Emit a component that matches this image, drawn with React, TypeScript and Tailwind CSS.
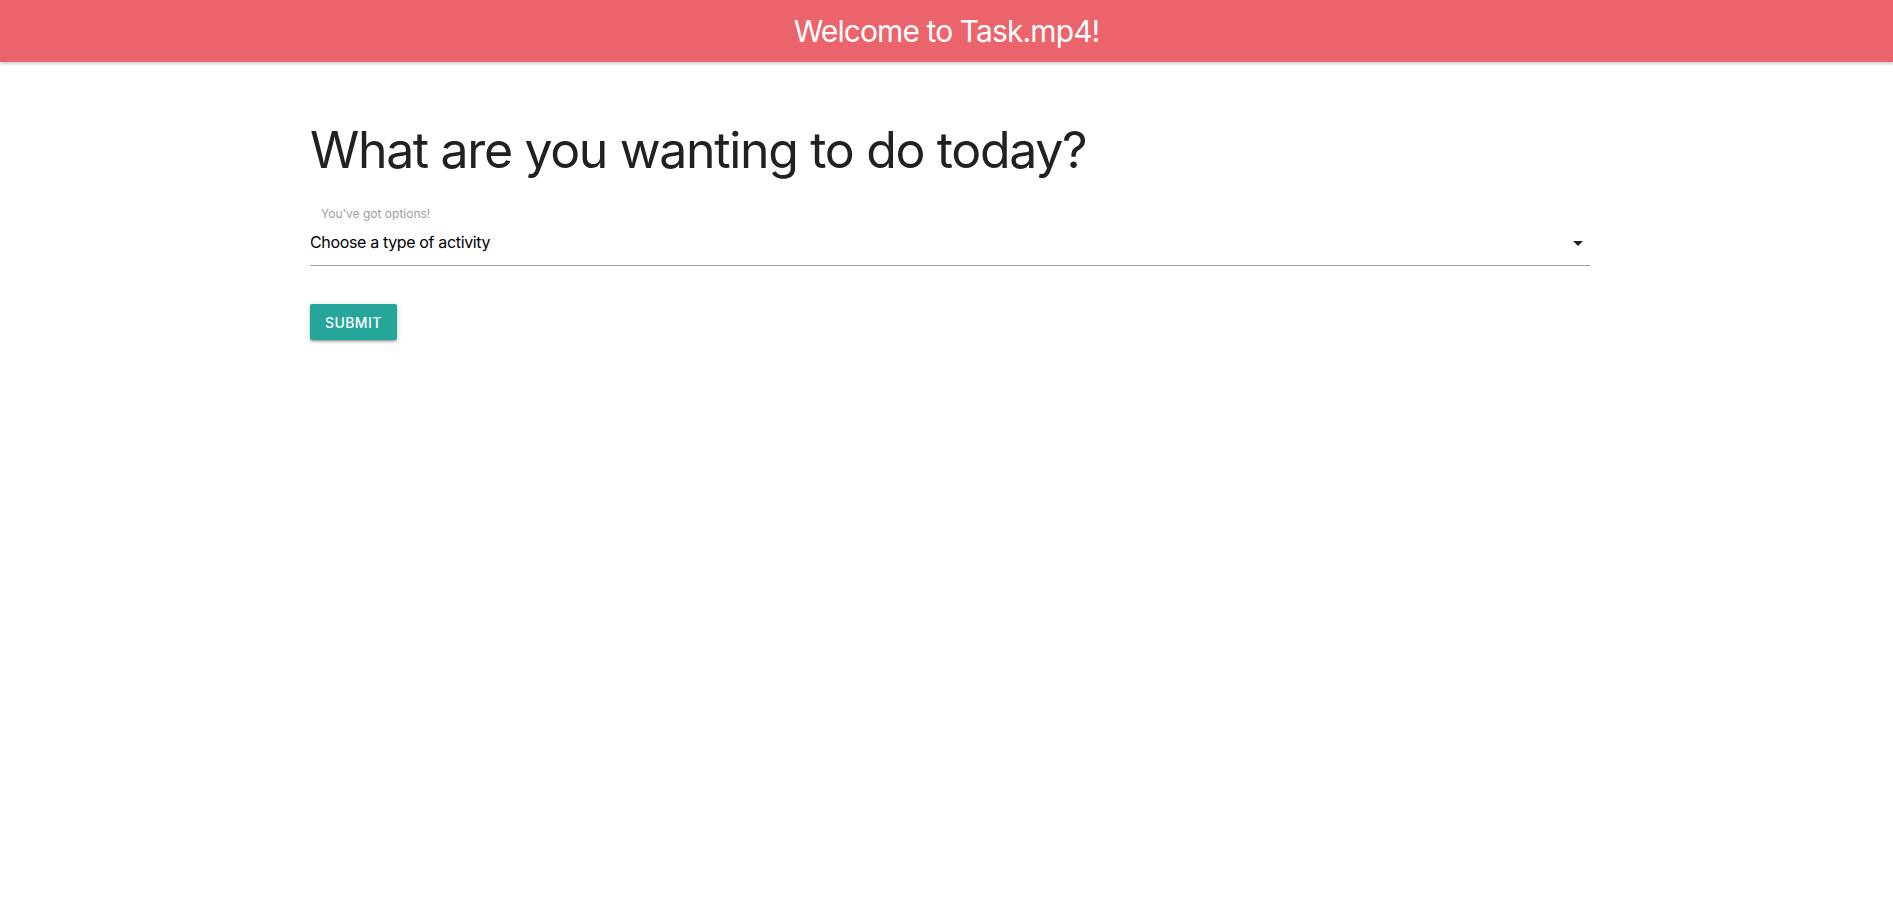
import React, { useState } from 'react';

const activities = ['Education', 'Recreational', 'Social', 'DIY', 'Charity', 'Cooking', 'Relaxation', 'Music', 'Busywork'];

const App: React.FC = () => {
  const [activity, setActivity] = useState('');

  return (
    <div className="min-h-screen bg-white font-['Inter','Liberation_Sans',sans-serif]">
      <nav className="h-[62px] bg-[#ec646b] shadow-[0_2px_3px_rgba(0,0,0,0.2)] flex items-center justify-center">
        <span className="text-white text-[30px] leading-none tracking-[-0.9px]">Welcome to Task.mp4!</span>
      </nav>

      <main className="pl-[310px] pr-[303px]">
        <h2 className="mt-[61px] text-[50px] leading-[1.1] text-[#212121] tracking-[-1.35px]">
          What are you wanting to do today?
        </h2>

        <div className="mt-[30px]">
          <label className="block pl-[11px] text-[12px] leading-none text-[#9e9e9e]">You've got options!</label>
          <div className="relative mt-[5px] border-b border-[#9e9e9e]">
            <select
              value={activity}
              onChange={(e) => setActivity(e.target.value)}
              className="w-full appearance-none bg-transparent h-[40px] pb-[6px] text-[16px] tracking-[-0.35px] text-black outline-none cursor-pointer"
            >
              <option value="" disabled>Choose a type of activity</option>
              {activities.map((a) => (
                <option key={a} value={a.toLowerCase()}>{a}</option>
              ))}
            </select>
            <svg className="absolute right-[7px] top-[16px] pointer-events-none" width="10" height="5" viewBox="0 0 10 5">
              <path d="M0 0h10L5 5z" fill="#212121" />
            </svg>
          </div>
        </div>

        <button className="mt-[38px] h-[36px] px-[15px] rounded-[2px] bg-[#26a69a] text-white text-[14px] font-medium tracking-[0.4px] shadow-[0_2px_2px_rgba(0,0,0,0.14),0_3px_1px_-2px_rgba(0,0,0,0.12),0_1px_5px_rgba(0,0,0,0.2)]">
          SUBMIT
        </button>
      </main>
    </div>
  );
};

export default App;
